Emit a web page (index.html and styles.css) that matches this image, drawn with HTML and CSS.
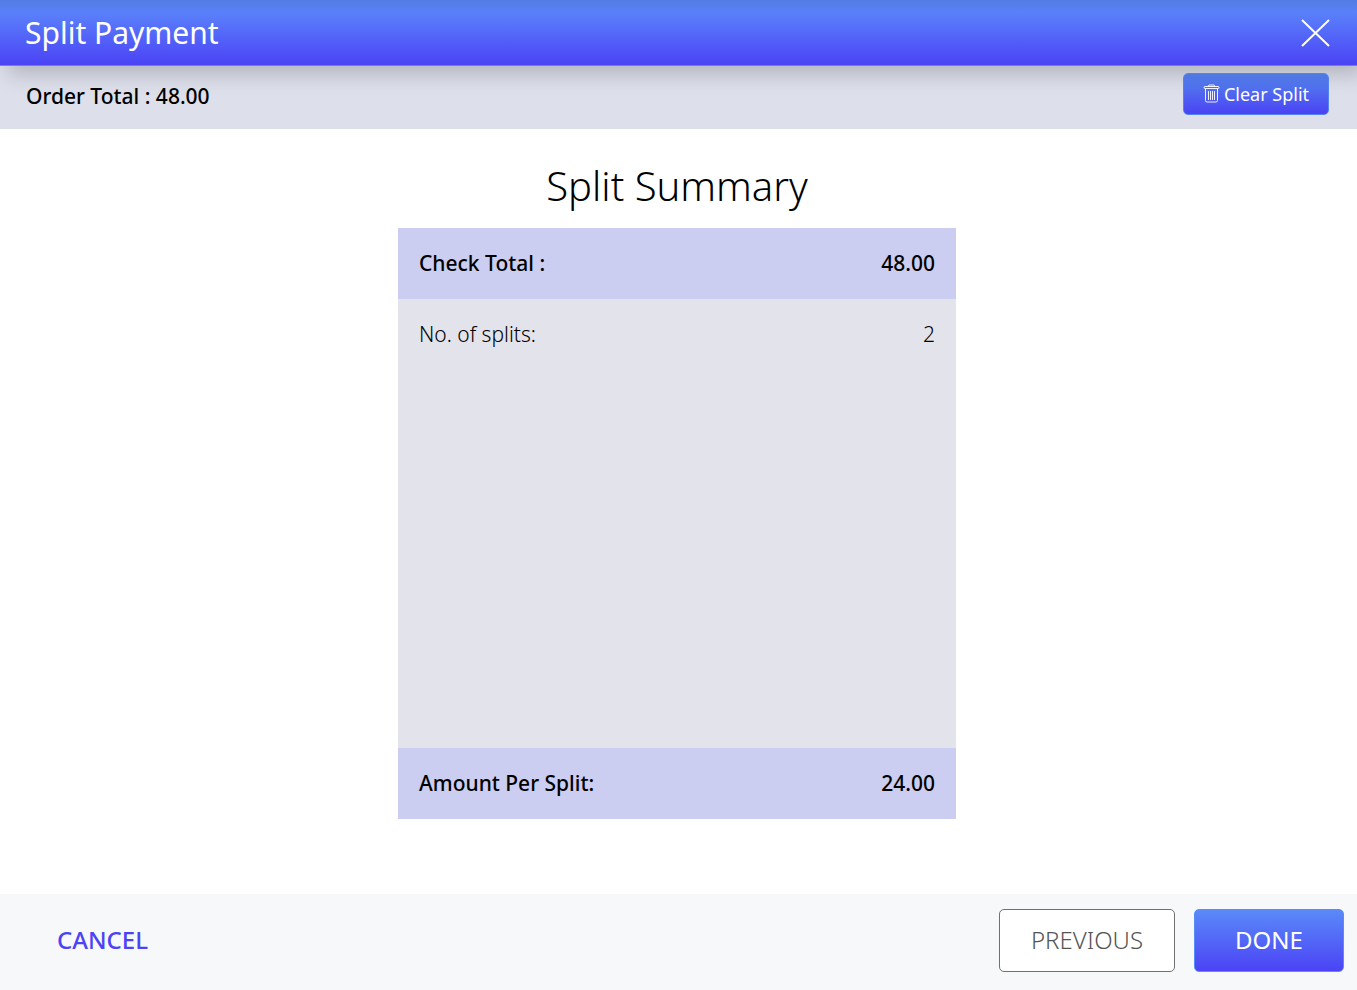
FILE: index.html
```html
<!DOCTYPE html>
<html lang="en">
<head>
    <meta charset="UTF-8">
    <meta name="viewport" content="width=device-width, initial-scale=1.0">
    <title>Split Payment</title>
    <link rel="stylesheet" href="styles.css">
</head>
<body>
    <header class="header">
        <h1 class="title">Split Payment</h1>
        <button type="button" class="close" aria-label="Close">
            <svg width="30" height="30" viewBox="0 0 30 30">
                <path d="M2 2l27 26M29 2l-27 26" fill="none" stroke="#fff" stroke-width="2"/>
            </svg>
        </button>
    </header>
    <div class="order-bar">
        <p class="order-total">Order Total : 48.00</p>
        <button type="button" class="btn-clear">
            <svg width="17" height="20" viewBox="0 0 17 20" fill="none" stroke="#fff" stroke-opacity="0.9">
                <rect x="1" y="2.5" width="15" height="2" rx="1"/>
                <path d="M5 2.5l1-1.5h5l1 1.5"/>
                <path d="M2.5 4.500v12q0 1.500 1.500 1.500h9q1.500 0 1.500-1.500v-12"/>
                <path d="M5.500 7v9M7.500 7v9M9.500 7v9M11.500 7v9"/>
            </svg>
            <span>Clear Split</span>
        </button>
    </div>
    <main class="content">
        <h2 class="summary-title">Split Summary</h2>
        <dl class="summary">
            <div class="row total">
                <dt>Check Total :</dt>
                <dd>48.00</dd>
            </div>
            <div class="row splits">
                <dt>No. of splits:</dt>
                <dd>2</dd>
            </div>
            <div class="row total">
                <dt>Amount Per Split:</dt>
                <dd>24.00</dd>
            </div>
        </dl>
    </main>
    <footer class="footer">
        <button type="button" class="btn btn-cancel">CANCEL</button>
        <div class="actions">
            <button type="button" class="btn btn-previous">PREVIOUS</button>
            <button type="button" class="btn btn-done">DONE</button>
        </div>
    </footer>
</body>
</html>
```
FILE: styles.css
```css
*{
    margin: 0;
    padding: 0;
    box-sizing: border-box;
}
body{
    display: flex;
    flex-direction: column;
    min-height: 100vh;
    font-family: "Noto Sans", "Open Sans", sans-serif;
    color: #000;
    background-color: #fff;
}
button{
    font-family: inherit;
    cursor: pointer;
}
.header{
    position: relative;
    display: flex;
    align-items: center;
    justify-content: space-between;
    height: 66px;
    padding: 0 27px 0 25px;
    border-bottom: 1px solid #5a85f5;
    background: linear-gradient(#537de2, #5a80fb 20%, #4b43f5);
    box-shadow: 8px 8px 20px rgba(0, 0, 0, 0.2);
}
.title{
    font-size: 30px;
    font-weight: 400;
    color: #fff;
}
.close{
    display: flex;
    border: none;
    background: none;
}
.order-bar{
    display: flex;
    align-items: flex-start;
    justify-content: space-between;
    height: 63px;
    padding: 7px 28px 0 26px;
    background-color: #dddfeb;
}
.order-total{
    padding-top: 8px;
    font-size: 21px;
    line-height: 30px;
    font-weight: 500;
}
.btn-clear{
    position: relative;
    display: flex;
    align-items: center;
    justify-content: center;
    gap: 4px;
    width: 146px;
    height: 42px;
    border: 1px solid #5384ee;
    border-radius: 5px;
    background: linear-gradient(#507ae2, #5070ee 35%, #4b43f5);
    font-size: 18px;
    color: #fff;
}
.content{
    flex: 1;
    display: flex;
    flex-direction: column;
    align-items: center;
    padding: 29px 23px 75px 20px;
}
.summary-title{
    margin-bottom: 14px;
    font-size: 40px;
    line-height: 56px;
    font-weight: 300;
}
.summary{
    flex: 1;
    display: flex;
    flex-direction: column;
    width: 100%;
    max-width: 558px;
}
.row{
    display: flex;
    justify-content: space-between;
    padding: 20px 21px;
    font-size: 21px;
    line-height: 31px;
}
.total{
    font-weight: 500;
    background-color: #cbcdf1;
}
.splits{
    flex: 1;
    font-weight: 300;
    background-color: #e3e3ec;
}
.footer{
    display: flex;
    align-items: center;
    justify-content: space-between;
    min-height: 96px;
    padding: 0 13px 3px 26px;
    background-color: #f6f8fa;
}
.actions{
    display: flex;
    gap: 19px;
}
.btn{
    height: 63px;
    padding: 0 30px 2px;
    border: 1px solid transparent;
    border-radius: 5px;
    font-size: 24px;
}
.btn-cancel{
    font-weight: 500;
    color: #4b43f5;
    background: none;
}
.btn-previous{
    min-width: 176px;
    border-color: #717171;
    font-weight: 300;
    color: #555;
    background-color: #fff;
}
.btn-done{
    min-width: 150px;
    border-color: #5a8cf8;
    color: #fff;
    background: linear-gradient(#5a8af9, #4b43f5);
}
```
